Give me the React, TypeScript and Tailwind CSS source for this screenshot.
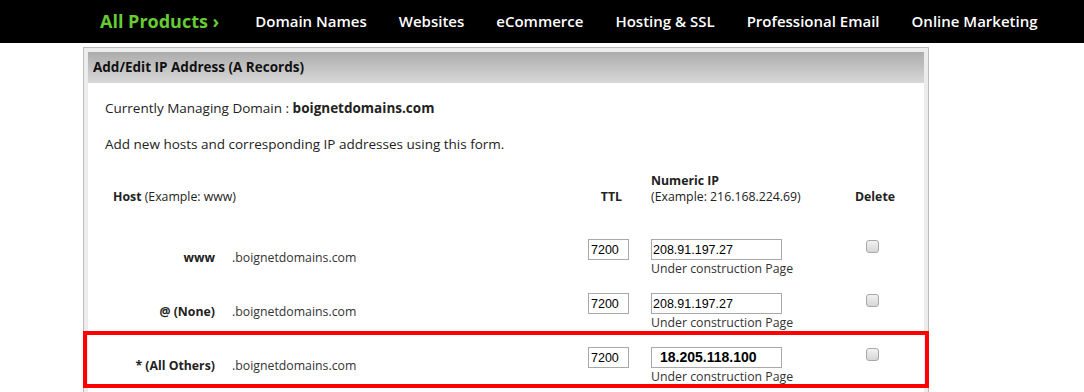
const navItems = ["Domain Names", "Websites", "eCommerce", "Hosting & SSL", "Professional Email", "Online Marketing"];

const rows = [
  { host: "www", ttl: "7200", ip: "208.91.197.27", highlight: false },
  { host: "@ (None)", ttl: "7200", ip: "208.91.197.27", highlight: false },
  { host: "* (All Others)", ttl: "7200", ip: "18.205.118.100", highlight: true },
];

function Checkbox() {
  return (
    <span className="block h-[13px] w-[13px] rounded-[3px] border border-[#a8a8a8] bg-linear-to-b from-[#f2f2f2] to-[#d6d6d6]" />
  );
}

function RecordRow({ host, ttl, ip, highlight }: (typeof rows)[number]) {
  return (
    <div className="relative flex h-[54px] items-center">
      {highlight && (
        <div className="pointer-events-none absolute -left-[5px] -right-[5px] -top-[8px] bottom-[5px] border-4 border-[#ff0000]" />
      )}
      <div className="w-[127px] text-right text-[12.3px] font-bold text-[#222]">{host}</div>
      <div className="ml-[17px] w-[356px] text-[12.3px] text-[#333]">.boignetdomains.com</div>
      <div className="flex w-[41px] self-start pt-2">
        <input
          readOnly
          value={ttl}
          className="h-[21px] w-[41px] border border-[#a9a9a9] px-[2px] font-['Liberation_Sans',Arial,sans-serif] text-[12.5px] text-black outline-none"
        />
      </div>
      <div className="ml-[22px] w-[200px] self-start pt-2">
        <input
          readOnly
          value={ip}
          className={
            highlight
              ? "block h-[21px] w-[131px] border border-[#a9a9a9] pl-[8px] font-['Liberation_Sans',Arial,sans-serif] text-[14px] font-bold text-black outline-none"
              : "block h-[21px] w-[131px] border border-[#a9a9a9] px-[1px] font-['Liberation_Sans',Arial,sans-serif] text-[12.5px] text-black outline-none"
          }
        />
        <div className="mt-px text-[12.3px] leading-4 text-[#333]">Under construction Page</div>
      </div>
      <div className="ml-[15px] self-start pt-[9px]">
        <Checkbox />
      </div>
    </div>
  );
}

export default function App() {
  return (
    <div className="min-h-screen bg-white font-['Open_Sans',sans-serif]">
      <nav className="flex h-[43px] items-center bg-black pl-[100px]">
        <span className="text-[18px] font-bold text-[#66cc33]">All Products ›</span>
        <ul className="ml-[36px] flex gap-[32px]">
          {navItems.map((n) => (
            <li key={n} className="text-[15px] font-semibold text-white">
              {n}
            </li>
          ))}
        </ul>
      </nav>

      <div className="ml-[83px] mt-[4px] w-[846px] border border-[#bcbcbc] bg-[#ececec] px-[4px] pt-[4px]">
        <div className="flex h-[31px] items-center bg-linear-to-b from-[#acacac] to-[#d8d8d8] pl-[5px] text-[13.5px] font-bold text-[#111]">
          Add/Edit IP Address (A Records)
        </div>
        <div className="bg-white pb-6">
          <p className="pl-[17px] pt-[15px] text-[13.5px] leading-5 text-[#222]">
            Currently Managing Domain : <b>boignetdomains.com</b>
          </p>
          <p className="mt-4 pl-[17px] text-[13.5px] leading-5 text-[#222]">
            Add new hosts and corresponding IP addresses using this form.
          </p>

          <div className="mt-[19px] flex items-end text-[12.3px] leading-4 text-[#222]">
            <div className="w-[300px] pl-[25px]">
              <b>Host</b> (Example: www)
            </div>
            <div className="w-[234px] text-right font-bold">TTL</div>
            <div className="ml-[29px] w-[200px]">
              <div className="font-bold">Numeric IP</div>
              <div>(Example: 216.168.224.69)</div>
            </div>
            <div className="ml-[4px] font-bold">Delete</div>
          </div>

          <div className="mt-[26px]">
            {rows.map((r) => (
              <RecordRow key={r.host} {...r} />
            ))}
          </div>
        </div>
      </div>
    </div>
  );
}
